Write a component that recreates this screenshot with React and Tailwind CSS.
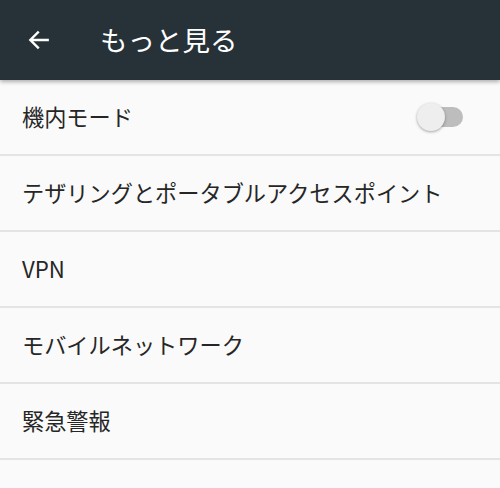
import React from 'react'

const font = { fontFamily: '"Noto Sans CJK JP", Roboto, "Noto Sans", sans-serif' }

const items = [
  { label: '機内モード', toggle: true },
  { label: 'テザリングとポータブルアクセスポイント' },
  { label: 'VPN' },
  { label: 'モバイルネットワーク' },
  { label: '緊急警報' },
]

function Toggle() {
  return (
    <div className="relative w-[46px] h-[30px] flex items-center">
      <div className="absolute left-[5px] right-0 h-[20px] rounded-full bg-[#bdbdbd]" />
      <div className="absolute left-0 top-[1px] w-[28px] h-[28px] rounded-full bg-[#eeeeee] shadow-[0_1px_3px_rgba(0,0,0,0.35)]" />
    </div>
  )
}

export default function App() {
  return (
    <div className="w-[500px] h-[488px] overflow-hidden bg-[#fafafa]" style={font}>
      <div className="relative z-10 h-[80px] bg-[#263238] flex items-center shadow-[0_2px_4px_rgba(0,0,0,0.3)]">
        <div className="w-[100px] flex items-center pl-[26px]">
          <svg width="26" height="26" viewBox="0 0 24 24" fill="none" stroke="#ffffff" strokeWidth="2.2" strokeLinecap="square">
            <path d="M20 12H5M11 5l-7 7 7 7" />
          </svg>
        </div>
        <h1 className="text-white text-[27.5px] leading-none">もっと見る</h1>
      </div>
      <div className="flex flex-col">
        {items.map((it) => (
          <div key={it.label} className="h-[76px] flex items-center justify-between pl-[22px] pr-[37px] border-b-2 border-[#e4e4e4]">
            <span className="text-[22.2px] text-[#262626]">{it.label}</span>
            {it.toggle && <Toggle />}
          </div>
        ))}
      </div>
    </div>
  )
}
